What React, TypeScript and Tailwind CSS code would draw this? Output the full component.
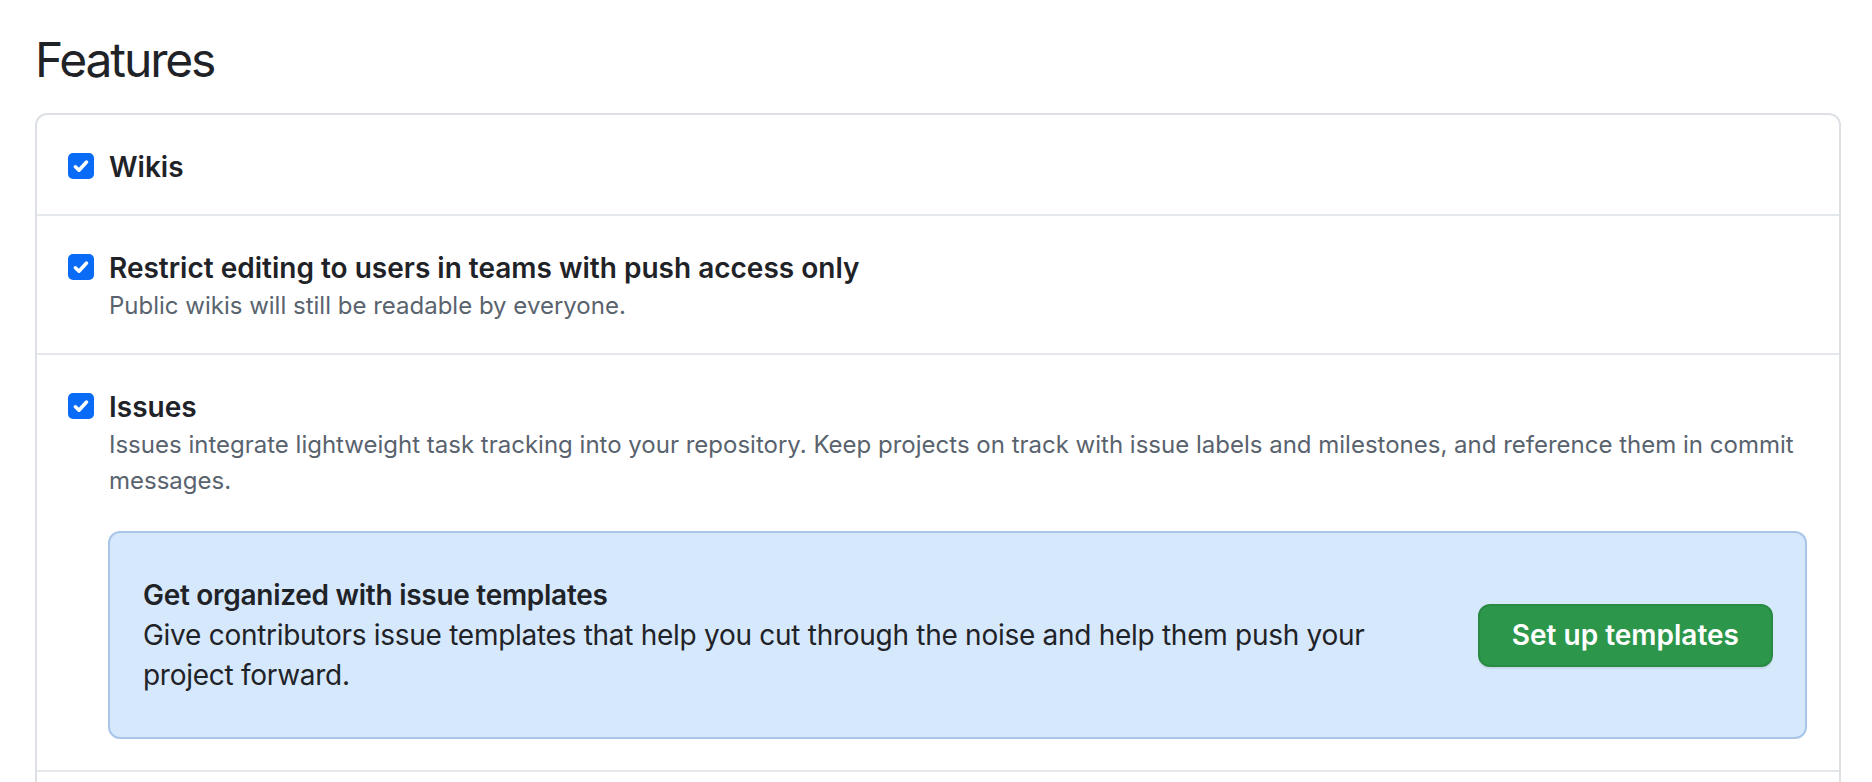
import { ReactNode } from 'react'

function Checkbox() {
  return (
    <span className="mt-[6px] flex h-[26px] w-[26px] shrink-0 items-center justify-center rounded-[5px] bg-[#0a6cf6]">
      <svg width="20" height="20" viewBox="0 0 16 16" fill="none" aria-hidden="true">
        <path
          d="M3.5 8.6l2.9 2.8 6-6.6"
          stroke="white"
          strokeWidth="2.8"
          strokeLinecap="round"
          strokeLinejoin="round"
        />
      </svg>
    </span>
  )
}

function FeatureRow({
  label,
  note,
  last,
  children,
  pb = 'pb-[27px]',
}: {
  label: string
  note?: string
  last?: boolean
  children?: ReactNode
  pb?: string
}) {
  return (
    <li className={`flex items-start gap-[15px] pl-[31px] pr-[32px] pt-[32px] ${pb} ${last ? '' : 'border-b-2 border-[#e4e7eb]'}`}>
      <Checkbox />
      <div className="min-w-0 flex-1">
        <div className="text-[28px] font-semibold leading-[40px] text-[#1f2328]">{label}</div>
        {note ? (
          <p className="text-[24px] leading-[36px] text-[#59636e]">{note}</p>
        ) : null}
        {children}
      </div>
    </li>
  )
}

export default function App() {
  return (
    <div className="min-h-screen bg-white pl-[35px] pr-[31px] pt-[30px] font-['Inter','Noto_Sans',sans-serif] antialiased">
      <h2 className="mb-[23px] text-[48px] font-normal leading-[60px] tracking-[-0.045em] text-[#1f2328]">
        Features
      </h2>

      <ul className="rounded-[12px] border-2 border-[#dde1e6]" role="list">
        <FeatureRow label="Wikis" />
        <FeatureRow
          label="Restrict editing to users in teams with push access only"
          note="Public wikis will still be readable by everyone."
          pb="pb-[29px]"
        />
        <FeatureRow
          label="Issues"
          note="Issues integrate lightweight task tracking into your repository. Keep projects on track with issue labels and milestones, and reference them in commit messages."
          pb="pb-[31px]"
        >
          <div className="-ml-[1px] mt-[32px] flex items-center justify-between rounded-[12px] border-2 border-[#a9c6e8] bg-[#d6e8fc] py-[42px] pl-[33px] pr-[32px]">
            <div className="max-w-[1260px]">
              <h4 className="text-[28px] font-semibold leading-[40px] tracking-[-0.01em] text-[#1f2328]">
                Get organized with issue templates
              </h4>
              <p className="text-[28px] leading-[40px] tracking-[-0.01em] text-[#1f2328]">
                Give contributors issue templates that help you cut through the noise and help them push your project forward.
              </p>
            </div>
            <button
              type="button"
              className="flex h-[63px] shrink-0 items-center rounded-[12px] border-2 border-[#288a43] bg-[#2c974b] px-[32px] text-[28px] font-semibold text-white shadow-[0_2px_0_rgba(31,35,40,0.08)]"
            >
              Set up templates
            </button>
          </div>
        </FeatureRow>
        <li className="h-[40px]" />
      </ul>
    </div>
  )
}
